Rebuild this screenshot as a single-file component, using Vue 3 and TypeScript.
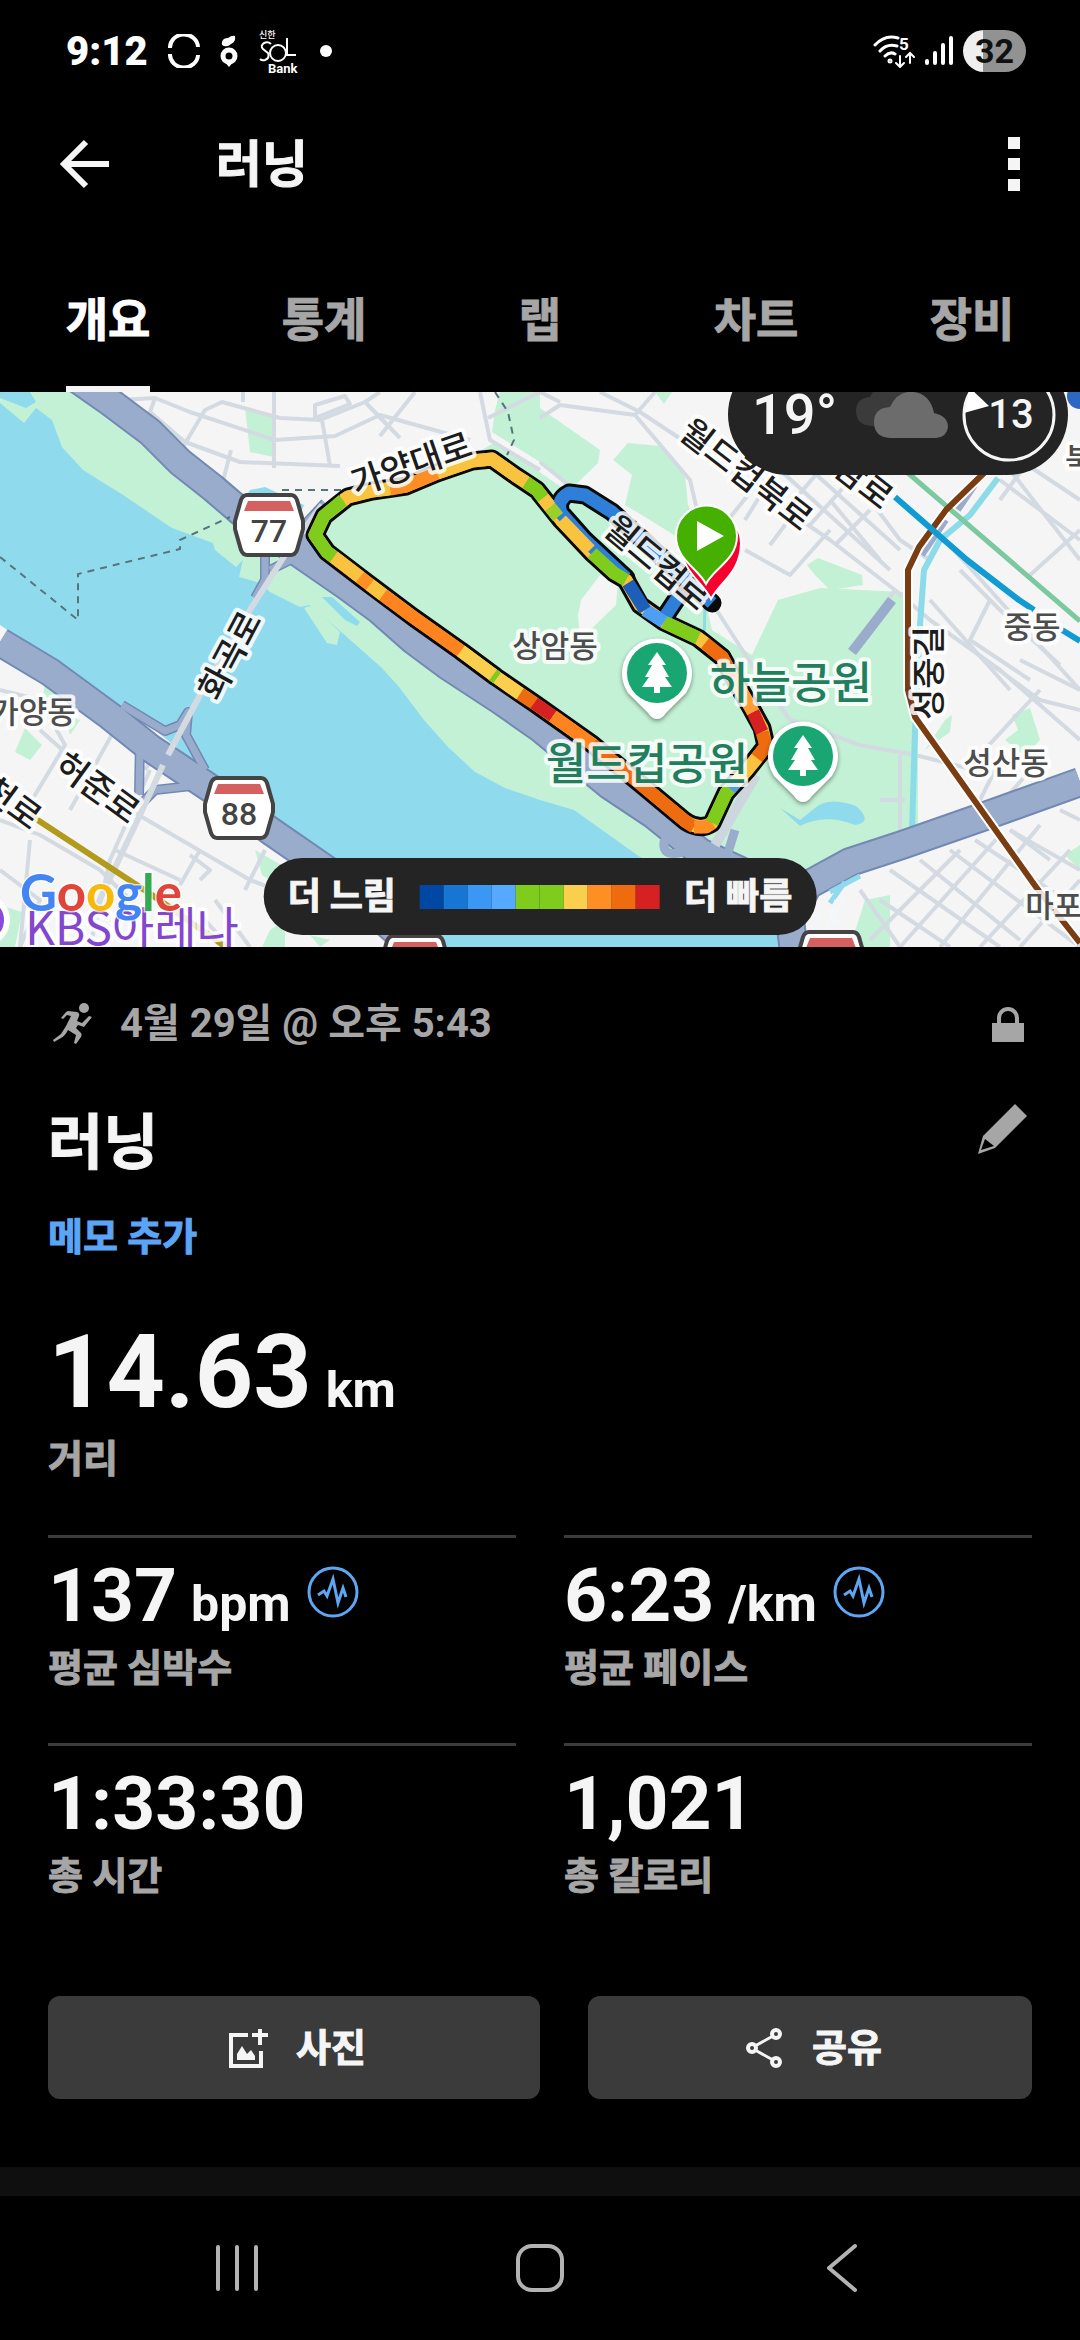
<script setup lang="ts">
import { ref } from 'vue'

interface Metric { value: string; unit?: string; label: string; insight?: boolean }
interface MapLabel { text: string; x: number; y: number; size: number; turn?: number; kind: 'road' | 'area' | 'park' | 'place' }
interface Segment { color: string; points: string }

const tabs = ['개요', '통계', '랩', '차트', '장비']
const active = ref('개요')

const metrics: Metric[] = [
  { value: '137', unit: 'bpm', label: '평균 심박수', insight: true },
  { value: '6:23', unit: '/km', label: '평균 페이스', insight: true },
  { value: '1:33:30', label: '총 시간' },
  { value: '1,021', label: '총 칼로리' },
]

const scale = ['#0048a3', '#1776d3', '#3b97f4', '#55a9ff', '#7fcc1d', '#7fcc1d', '#f9cf4d', '#ff8f24', '#ef6b10', '#d52121']

const loop = 'M492 459L472 461L437 473L406 486L372 491L348 497L324 516L315 535L327 552L365 581L413 617L461 651L496 677L534 703L592 744L643 786L685 821Q700 831 712 823L726 793L747 770L766 746L762 728L750 706L733 677L722 657L698 638L664 622L640 605L626 580L614 573L592 553L561 520L537 490L516 476Z'
const spur = 'M626 578L585 540L561 513Q556 500 569 493L585 495L612 512L712 603M664 618L680 594'

const segments: Segment[] = [
  { color: '#7fcc1d', points: '343,500 324,516 315,535 327,552 334,557' },
  { color: '#f9c23f', points: '334,557 360,577' },
  { color: '#ff8f24', points: '360,577 370,585' },
  { color: '#f9c23f', points: '370,585 383,595' },
  { color: '#ff8420', points: '383,595 413,617 461,651' },
  { color: '#f9cf4d', points: '461,651 496,677 520,694' },
  { color: '#7fcc1d', points: '493,675 497,678' },
  { color: '#ef6b10', points: '520,694 534,703' },
  { color: '#d52121', points: '534,703 553,716' },
  { color: '#ff8420', points: '553,716 592,744' },
  { color: '#ef6b10', points: '592,744 643,786 685,821 694,827' },
  { color: '#ff8f24', points: '694,827 706,827 712,823' },
  { color: '#7fcc1d', points: '712,823 726,793 730,789' },
  { color: '#4f9fe0', points: '730,789 736,782' },
  { color: '#f9c23f', points: '736,782 747,770 757,758' },
  { color: '#ef6b10', points: '757,758 766,746 762,732' },
  { color: '#d52121', points: '762,732 753,712' },
  { color: '#ff9c35', points: '753,712 733,677' },
  { color: '#ef6b10', points: '733,677 722,657 705,643' },
  { color: '#f9c23f', points: '705,643 698,638' },
  { color: '#7fcc1d', points: '698,638 664,622' },
  { color: '#4f9ef5', points: '664,622 645,610' },
  { color: '#1d5fb8', points: '645,610 628,583' },
  { color: '#7fcc1d', points: '626,580 614,573 592,553' },
  { color: '#f9c23f', points: '590,550 561,520' },
  { color: '#9bd02a', points: '558,517 550,507' },
  { color: '#f9c23f', points: '550,507 543,498' },
  { color: '#7fcc1d', points: '543,498 537,490 526,482' },
  { color: '#f9c23f', points: '526,482 516,476 492,459 472,461 437,473' },
  { color: '#ff8f24', points: '437,473 406,486 390,489' },
  { color: '#f9c23f', points: '390,489 372,491 348,497 343,500' },
]

const labels: MapLabel[] = [
  { text: '가양대로', x: 411, y: 463, size: 34, turn: -19, kind: 'road' },
  { text: '화곡로', x: 229, y: 655, size: 34, turn: -62, kind: 'road' },
  { text: '월드컵북로', x: 747, y: 474, size: 34, turn: 38, kind: 'road' },
  { text: '월드컵로', x: 658, y: 562, size: 34, turn: 40, kind: 'road' },
  { text: '상암로', x: 852, y: 472, size: 34, turn: 38, kind: 'road' },
  { text: '성중길', x: 928, y: 673, size: 34, turn: -90, kind: 'road' },
  { text: '허준로', x: 98, y: 787, size: 34, turn: 36, kind: 'road' },
  { text: '양천로', x: 0, y: 793, size: 34, turn: 36, kind: 'road' },
  { text: '상암동', x: 555, y: 646, size: 31, kind: 'area' },
  { text: '중동', x: 1032, y: 627, size: 31, kind: 'area' },
  { text: '북가좌동', x: 1122, y: 459, size: 31, kind: 'area' },
  { text: '성산동', x: 1006, y: 763, size: 31, kind: 'area' },
  { text: '마포구', x: 1068, y: 906, size: 31, kind: 'area' },
  { text: '가양동', x: 33, y: 712, size: 31, kind: 'area' },
  { text: '하늘공원', x: 791, y: 683, size: 44, kind: 'park' },
  { text: '월드컵공원', x: 647, y: 764, size: 44, kind: 'park' },
  { text: 'KBS아레나', x: 132, y: 928, size: 46, kind: 'place' },
]

const shields = [
  { x: 269, y: 525, no: '77' },
  { x: 239, y: 808, no: '88' },
  { x: 415, y: 966, no: '88' },
  { x: 831, y: 962, no: '77' },
]

const trees = [{ x: 657, y: 673 }, { x: 803, y: 756 }]

const highways = [
  'M70 374L110 402L150 432L180 462L213 488L248 518L303 556L345 585L379 610L413 640L448 666L500 700L540 728L609 785L654 815L700 852L760 880L800 900',
  'M0 642L50 672L110 716L150 748L213 790L272 832L330 872L400 935L420 960',
  'M795 960L790 920L808 885L850 862L902 845L988 815L1080 782',
]

const streets = [
  'M120 400L155 398L150 412L185 442L240 462L340 466', 'M155 398L190 412L275 440L335 436L380 415L470 440',
  'M180 452L205 410L222 402L280 418L320 420L365 402L380 392', 'M243 392V402M274 392V468', 'M231 450L222 485',
  'M365 402L400 438M380 436L415 392', 'M322 420L330 466', 'M315 405L345 396L350 404L315 418Z', 'M480 392L490 440L540 470',
  'M488 418L540 392', 'M540 418L560 405L635 415L690 480L697 510', 'M600 392L640 412L720 465L830 540L895 590',
  'M635 415L655 392', 'M895 590L930 620L1000 670L1080 740', 'M895 590L860 640', 'M745 550L790 575L830 530',
  'M720 530L760 480L790 490', 'M712 603L752 665L790 720', 'M790 720L860 745L915 755L975 770', 'M540 392L560 402M540 462L575 490',
  'M770 480L745 520M800 505L770 545M830 500L880 560', 'M840 480L870 500L900 540L930 560', 'M780 470L890 570M800 460L900 550M820 470L790 505M850 480L810 525M870 510L835 545',
  'M945 540L1080 690', 'M960 570L1000 610L1060 665', 'M990 600L970 640L1030 680', 'M930 600L1010 690', 'M1080 530L1030 575M1000 480L1080 540M1010 470L1080 560M1020 460L1080 500M1040 445L1000 500',
  'M985 660L1040 700L1080 710M1040 690L975 760M1020 660L1080 690', 'M900 755V838M880 800H905', 'M995 770L975 810M1030 770L1000 805',
  'M0 690L40 700L65 745L20 820M40 730L130 810L250 880L330 910', 'M150 770L110 860L90 947M145 770L160 745', 'M0 820L40 835L100 870M30 840L20 947M70 810L120 720',
  'M115 850L180 880M200 850L180 885M190 855L210 870L200 880M265 850L245 890M100 870L130 900', 'M0 870L40 900L20 947', 'M215 900L250 947M200 915L230 947',
  'M890 870L1000 947M880 900L950 947M920 860L1020 940M950 850L1080 947M975 840L1080 910M1010 830L1080 870M860 890L900 947',
  'M870 940L960 850M900 947L1000 835M940 947L1040 825M980 947L1070 850M1020 947L1080 880M1050 860L1010 830M1060 810L1080 820',
]
</script>

<template>
  <main class="screen">
    <header class="status">
      <div class="status-side">
        <span class="clock">9:12</span>
        <svg width="32" height="34" viewBox="0 0 32 34" fill="none" stroke="#fff" stroke-width="4"><path d="M2 14A14 13 0 0 1 30 13M2 20A14 13 0 0 0 30 21" /></svg>
        <svg width="18" height="32" viewBox="0 0 18 32" fill="#fff"><circle cx="9" cy="21" r="6" fill="none" stroke="#fff" stroke-width="5" /><path d="M4 26L9 32L14 26ZM2 7Q3 3 8 3Q12 0 15 1Q16 7 11 9Q8 12 4 11Q1 10 2 7Z" /></svg>
        <svg width="42" height="48" viewBox="0 0 42 48" fill="#fff">
          <text x="1" y="11" font-size="9" font-weight="500">신한</text>
          <path d="M13 17Q10 14 6 16Q2 19 5 22L10 26Q12 31 7 33Q4 34 2 32M29 11V28H38" fill="none" stroke="#fff" stroke-width="2" />
          <circle cx="20" cy="26" r="8" fill="none" stroke="#fff" stroke-width="2" />
          <text x="10" y="46" font-size="13" font-weight="700">Bank</text>
        </svg>
        <i class="dot" />
      </div>
      <div class="status-side right">
        <svg width="42" height="34" viewBox="0 0 42 34" fill="none" stroke="#fff" stroke-width="3" stroke-linecap="round">
          <path d="M2 11Q12 0 25 4M7 17Q14 9 24 12M12 22Q17 17 22 20" /><circle cx="17" cy="27" r="1" /><path d="M27 22V32M23 29L27 33L31 29M37 29V20M33 23L37 19L41 23" stroke-width="2" />
          <text x="26" y="16" font-size="17" font-weight="700" fill="#fff" stroke="none">5</text>
        </svg>
        <svg width="28" height="30" viewBox="0 0 28 30" stroke="#fff" stroke-width="4" stroke-linecap="round"><path d="M2 25V27M10 17V27M18 9V27M26 2V27" /></svg>
        <span class="battery">32</span>
      </div>
    </header>

    <div class="appbar">
      <button class="plain" aria-label="뒤로">
        <svg width="50" height="50" viewBox="0 0 50 50" fill="none" stroke="#f5f5f5" stroke-width="6"><path d="M49 25H5M26 3L4 25L26 47" /></svg>
      </button>
      <h1>러닝</h1>
      <button class="plain more" aria-label="더보기"><i /><i /><i /></button>
    </div>

    <nav class="tabs">
      <button v-for="t in tabs" :key="t" :class="{ on: t === active }" @click="active = t"><span>{{ t }}</span></button>
    </nav>

    <section class="map">
      <svg class="canvas" viewBox="0 392 1080 555" role="img" aria-label="지도">
        <rect y="392" width="1080" height="555" fill="#f5f5f5" />
        <g fill="#c3f1d5">
          <path d="M0 392H75L180 465L240 520L300 560L440 668L600 785L700 855L800 880L780 947H560L0 600Z" />
          <path d="M245 408L274 417V457L250 452ZM500 392L540 392V462L492 432L495 410Z" />
          <path d="M540 408L600 450L598 463L570 490L540 462ZM655 392H672L664 404Z" />
          <path d="M613 460L628 443L660 446L685 475L688 505L700 530L690 545L650 520L625 505L632 475Z" />
          <path d="M324 518L350 499L440 476L495 442L560 486L620 510L705 600L712 630L752 655L778 600L820 588L903 592L918 735L918 833L850 858L800 890L690 845L640 800L534 720L413 632L327 565Z" />
          <path d="M807 565L818 558L862 575L863 585L830 590L815 575ZM945 720L952 715L950 732L925 750ZM1012 715L1030 708L1040 740L1025 756L1005 740L1018 730ZM1080 845L1065 855L1080 870ZM865 900L890 895V947H850Z" />
          <path d="M25 728L42 745L30 760L15 752ZM45 685L60 695L55 710L42 700ZM65 715L80 720L70 735ZM255 850L290 870L285 890L262 875ZM0 905L22 912L15 947H0ZM270 930L285 920V947H262ZM310 935L330 940L320 947Z" />
        </g>
        <path d="M581 600L600 575L618 583L616 605L580 640L578 615Z" fill="#f5f5f5" />
        <g fill="#90daee">
          <path d="M0 403L24 423L36 408L52 420L62 447L83 470L120 493L172 528L213 543L215 550L236 567L243 560L239 577L260 583L270 592L300 607L310 605L339 630L382 668L399 687L424 720L448 747L475 772L505 788L540 800L574 810L640 857L700 885L780 905V947H425L370 890L317 858L213 777L155 730L110 700L60 665L0 625Z" />
          <path d="M0 392H30L36 402L26 408L0 398ZM250 490L265 487L304 505L300 515L240 505ZM322 597L332 597L360 622L357 626L345 620Z" />
          <path d="M780 808L800 820L815 808Q828 796 856 806Q874 822 855 825Q825 813 800 826Z" />
        </g>
        <path d="M304 608L312 605L340 632L337 645L327 643Z" fill="#c3f1d5" />
        <g fill="none" stroke="#d4dae2" stroke-width="4" stroke-linejoin="round"><path v-for="(s, i) in streets" :key="i" :d="s" /></g>
        <g fill="none" stroke="#8bdbe8" stroke-width="6"><path d="M998 478L970 515L940 540L924 570L920 625L915 730L912 832" /><path d="M705 606L704 640" stroke-width="3" /></g>
        <path d="M892 600L852 652" fill="none" stroke="#9aaccb" stroke-width="10" />
        <path d="M946 520L922 555M975 485L958 510" fill="none" stroke="#9aaccb" stroke-width="6" />
        <g fill="none" stroke="#7189b3" stroke-linejoin="round">
          <path v-for="(h, i) in highways" :key="'e' + i" :d="h" stroke-width="30" />
          <path d="M325 503L295 535M265 550V580L255 598M270 570L300 555M122 705L165 731L180 725L188 712L186 735L205 770M140 740L139 795M140 805L155 790L200 785" stroke-width="10" />
        </g>
        <g fill="none" stroke="#9aaccb" stroke-linejoin="round">
          <path v-for="(h, i) in highways" :key="'f' + i" :d="h" stroke-width="26" />
          <path d="M325 503L295 535M265 550V580L255 598M270 570L300 555M122 705L165 731L180 725L188 712L186 735L205 770M140 740L139 795M140 805L155 790L200 785" stroke-width="7" />
          <path d="M690 850Q662 860 664 842Q672 830 690 848M735 830L725 862" stroke-width="9" />
        </g>
        <path d="M300 528L315 548L345 572L330 578L296 556Z" fill="#9aaccb" />
        <path d="M860 876L830 892M845 882L830 903" fill="none" stroke="#90daee" stroke-width="5" />
        <g fill="none" stroke="#d4dae2" stroke-width="6"><path d="M322 505L285 555L250 610L200 695L168 755M163 765L140 815L95 910" /><path d="M756 775L715 845" stroke="#cdd5df" stroke-width="10" /></g>
        <path d="M825 935L836 900M842 925L832 920L845 895M813 905L818 922" fill="none" stroke="#f3f6fa" stroke-width="3" />
        <g fill="none" stroke="#55747c" stroke-width="2" stroke-dasharray="7 6"><path d="M0 557L78 620V574L180 549V540L230 517M282 490H345M495 392L508 412L514 440L507 455" /></g>
        <g fill="none" stroke-linejoin="round">
          <path d="M984 473L946 510L919 547L908 570V690L915 717L967 790L1036 887L1080 943" stroke="#fff" stroke-width="10" />
          <path d="M908 473L1080 621" stroke="#7cc8a0" stroke-width="5" />
          <path d="M984 473L946 510L919 547L908 570V690L915 717L967 790L1036 887L1080 943" stroke="#7a3d12" stroke-width="6" />
          <path d="M895 497L967 560L1019 600L1034 610M1062 630L1080 641" stroke="#109bd2" stroke-width="6" />
          <path d="M30 815L155 897L230 950" stroke="#b19a1c" stroke-width="6" />
        </g>
        <circle cx="1080" cy="396" r="13" fill="#2d67c4" />

        <g fill="none" stroke="#0a0a0a" stroke-width="19" stroke-linejoin="round" stroke-linecap="round"><path :d="loop" /><path :d="spur" /></g>
        <g fill="none" stroke-width="13" stroke-linejoin="round">
          <path :d="loop" stroke="#f9c23f" />
          <path :d="spur" stroke="#2f7fd8" />
          <polyline v-for="(s, i) in segments" :key="'s' + i" :points="s.points" :stroke="s.color" />
        </g>

        <g v-for="(s, i) in shields" :key="'h' + i" :transform="`translate(${s.x} ${s.y})`">
          <path d="M-22 -30H22Q26 -30 28 -25L34 -4V4L28 25Q26 30 22 30H-22Q-26 30 -28 25L-34 4V-4L-28 -25Q-26 -30 -22 -30Z" fill="#fff" stroke="#444" stroke-width="4" />
          <path d="M-21 -24H21L25 -14H-25Z" fill="#d56060" />
          <text class="shield" y="17">{{ s.no }}</text>
        </g>

        <g v-for="(l, i) in labels" :key="'l' + i" :transform="`translate(${l.x} ${l.y}) rotate(${l.turn ?? 0})`">
          <text :class="['lbl', l.kind]" :font-size="l.size" :y="Math.round(l.size * 0.37)">{{ l.text }}</text>
        </g>

        <g v-for="(t, i) in trees" :key="'t' + i" :transform="`translate(${t.x} ${t.y})`">
          <path class="pin" d="M0 46Q-5 46 -9 40L-29 20A35 35 0 1 1 29 20L9 40Q5 46 0 46Z" />
          <circle r="30" fill="#1aa673" />
          <path d="M0 -21L9 -8H5L12 4H8L15 14H3V20H-3V14H-15L-8 4H-12L-5 -8H-9Z" fill="#fff" />
        </g>
        <circle cx="-17" cy="920" r="24" fill="#8a4bdc" stroke="#fff" stroke-width="6" />

        <path d="M711 599C703 582 681 572 681 543A30 30 0 0 1 741 543C741 572 720 582 711 599Z" fill="#f5002f" stroke="#fff" stroke-width="2" />
        <path d="M706 584C698 568 676 560 676 536A30 30 0 0 1 737 536C737 560 714 568 706 584Z" fill="#45b000" stroke="#fff" stroke-width="2" />
        <path d="M697 521L724 536L697 551Z" fill="#fff" />
        <text class="google" x="20" y="911"><tspan fill="#4285f4">G</tspan><tspan fill="#e0443a">o</tspan><tspan fill="#f6b90c">o</tspan><tspan fill="#4285f4">g</tspan><tspan fill="#34a853">l</tspan><tspan fill="#e0443a">e</tspan></text>
      </svg>

      <div class="weather">
        <span class="temp">19°</span>
        <svg width="94" height="50" viewBox="0 0 94 50"><path d="M16 36Q0 35 0 21Q0 8 14 7Q20 -6 34 -6Q50 -6 54 8V36Z" fill="#3b3b3b" /><path d="M34 48Q18 47 18 32Q18 18 34 17Q42 0 58 2Q74 4 78 23Q92 26 92 37Q91 47 80 48Z" fill="#6c6c6c" /></svg>
        <div class="wind">
          <svg width="94" height="94" viewBox="0 0 94 94"><circle cx="47" cy="47" r="45" fill="none" stroke="#f5f5f5" stroke-width="3" /><path d="M8 20L2 45L27 38Z" fill="#fff" /></svg>
          <span>13</span>
        </div>
      </div>

      <div class="legend">
        <span>더 느림</span>
        <div class="bar"><i v-for="(c, i) in scale" :key="i" :style="{ background: c }" /></div>
        <span>더 빠름</span>
      </div>
    </section>

    <section class="details">
      <div class="row date">
        <svg width="40" height="42" viewBox="0 0 40 42" fill="#a6a6a6"><circle cx="31" cy="5" r="5" /><path d="M15 8L24 9Q27 10 26 13L24 18L29 20L36 13L39 14L31 24L25 22L23 25L28 30Q29 32 28 34L23 41L21 40L23 32L15 27Q12 33 8 35L1 39L0 37L8 31L13 23L18 13L14 12L10 16L8 15L13 9Z" /></svg>
        <p>4월 29일 @ 오후 5:43</p>
        <svg width="32" height="36" viewBox="0 0 32 36"><path d="M0 17H32V36H0Z" fill="#a6a6a6" /><path d="M7 18V12A9 9 0 0 1 25 12V18" fill="none" stroke="#a6a6a6" stroke-width="4" /></svg>
      </div>
      <div class="row title">
        <h2>러닝</h2>
        <button class="plain" aria-label="편집">
          <svg width="52" height="52" viewBox="0 0 52 52"><path d="M38 1L50 13L18 45L1 51L6 33Z" fill="#a6a6a6" /><path d="M8 36L17 43L4 47Z" fill="#000" /></svg>
        </button>
      </div>
      <a class="memo" href="#">메모 추가</a>

      <div class="distance">
        <p class="value big">14.63<small>km</small></p>
        <p class="label">거리</p>
      </div>

      <div class="grid">
        <div v-for="m in metrics" :key="m.label" class="cell">
          <p class="value">{{ m.value }}<small v-if="m.unit">{{ m.unit }}</small>
            <svg v-if="m.insight" width="52" height="52" viewBox="0 0 52 52" fill="none" stroke="#5ea6f2" stroke-width="3"><circle cx="26" cy="26" r="24" /><path d="M11 29L17 25L20 30L26 13L31 37L36 22L39 31" /></svg>
          </p>
          <p class="label">{{ m.label }}</p>
        </div>
      </div>

      <div class="actions">
        <button class="photo">
          <svg width="44" height="44" viewBox="0 0 44 44"><path d="M22 9H5V40H35V25" fill="none" stroke="#f5f5f5" stroke-width="4" /><path d="M34 3V19M26 9H42" stroke="#f5f5f5" stroke-width="4" /><path d="M11 34V28L16 20L21 28L25 24L29 30V34Z" fill="#f5f5f5" /></svg>
          사진
        </button>
        <button class="share">
          <svg width="44" height="44" viewBox="0 0 44 44" fill="none" stroke="#f5f5f5" stroke-width="4"><circle cx="34" cy="8" r="4" /><circle cx="10" cy="22" r="4" /><circle cx="34" cy="36" r="4" /><path d="M13 20L31 10M13 24L31 34" stroke-width="3" /></svg>
          공유
        </button>
      </div>
    </section>

    <div class="strip" />

    <footer class="sysnav">
      <button class="plain" aria-label="최근 앱"><svg width="50" height="50" viewBox="0 0 50 50" stroke="#b3b3b3" stroke-width="4" stroke-linecap="round"><path d="M5 4V46M24 4V46M43 4V46" /></svg></button>
      <button class="plain" aria-label="홈"><svg width="50" height="50" viewBox="0 0 50 50" fill="none" stroke="#b3b3b3" stroke-width="4"><rect x="3" y="3" width="44" height="44" rx="14" /></svg></button>
      <button class="plain" aria-label="이전"><svg width="50" height="50" viewBox="0 0 50 50" fill="none" stroke="#b3b3b3" stroke-width="4" stroke-linecap="round" stroke-linejoin="round"><path d="M38 3L12 25L38 47" /></svg></button>
    </footer>
  </main>
</template>

<style>
body { margin: 0; background: #000; }
</style>

<style scoped>
.screen { min-height: 100vh; display: flex; flex-direction: column; background: #000; color: #f5f5f5; font-family: Roboto, 'Noto Sans CJK KR', sans-serif; }
p, h1, h2 { margin: 0; }
svg { display: block; flex: none; }
button { font: inherit; color: inherit; border: 0; padding: 0; cursor: pointer; }
.plain { background: none; display: flex; align-items: center; justify-content: center; }
h1, h2, .tabs, .legend, .memo, .label, .actions { -webkit-text-stroke: 1px currentColor; }

.status { height: 102px; padding: 0 54px 0 66px; display: flex; justify-content: space-between; align-items: center; }
.status-side { display: flex; align-items: center; gap: 20px; color: #fff; }
.status-side.right { gap: 10px; }
.clock { font-size: 40px; font-weight: 900; }
.dot { width: 12px; height: 12px; border-radius: 50%; background: #fff; }
.battery { width: 63px; height: 42px; border-radius: 21px; background: linear-gradient(90deg, #efefef 20px, #929292 20px); color: #111; font-size: 34px; font-weight: 700; line-height: 42px; text-align: center; }

.appbar { height: 124px; padding: 0 60px; display: flex; align-items: center; }
.appbar h1 { flex: 1; margin-left: 106px; padding-top: 2px; font-size: 50px; font-weight: 700; line-height: 64px; }
.more { flex-direction: column; gap: 9px; }
.more i { width: 12px; height: 12px; background: #f5f5f5; }

.tabs { margin-top: 24px; display: grid; grid-template-columns: repeat(5, 1fr); }
.tabs button { background: none; color: #a6a6a6; font-size: 46px; font-weight: 700; line-height: 132px; display: flex; justify-content: center; }
.tabs span { padding-top: 4px; border-bottom: 6px solid transparent; }
.tabs .on { color: #fff; }
.tabs .on span { border-color: #f5f5f5; }

.map { position: relative; overflow: hidden; }
.canvas { width: 100%; height: auto; }
.lbl { text-anchor: middle; paint-order: stroke; stroke: #fff; stroke-width: 8px; stroke-linejoin: round; stroke-opacity: 0.85; font-weight: 500; font-family: 'Noto Sans CJK KR', sans-serif; }
.road { fill: #1c1c1c; }
.area { fill: #4d4d4d; }
.park { fill: #217f5d; }
.place { fill: #8347cf; font-weight: 400; }
.shield { text-anchor: middle; font-size: 32px; font-weight: 500; fill: #444; }
.google { font-family: Lato, sans-serif; font-size: 51px; font-weight: 700; paint-order: stroke; stroke: #fff; stroke-width: 3px; stroke-opacity: 0.7; }
.pin { fill: #fff; filter: drop-shadow(0 2px 2px rgba(0, 0, 0, 0.4)); }

.weather { position: absolute; right: 12px; top: -38px; height: 121px; box-sizing: border-box; padding: 0 12px 0 24px; display: flex; align-items: center; gap: 12px; border-radius: 61px; background: #242424; }
.temp { font-size: 56px; font-weight: 500; width: 92px; }
.wind { position: relative; }
.wind span { position: absolute; inset: 0; padding-left: 4px; line-height: 94px; text-align: center; font-size: 40px; font-weight: 500; }
.legend { position: absolute; left: 50%; bottom: 12px; transform: translateX(-50%); height: 77px; padding: 0 24px; display: flex; align-items: center; gap: 24px; border-radius: 39px; background: #242424; font-size: 36px; font-weight: 700; line-height: 48px; white-space: nowrap; }
.bar { display: flex; }
.bar i { width: 24px; height: 24px; }

.details { padding: 41px 48px 68px; }
.row { display: flex; align-items: center; }
.date { height: 72px; padding: 0 8px 0 5px; color: #a6a6a6; font-size: 40px; font-weight: 700; line-height: 56px; }
.date p { flex: 1; margin-left: 27px; }
.title { height: 84px; margin-top: 42px; justify-content: space-between; }
.title h2 { font-size: 60px; font-weight: 700; line-height: 84px; }
.title .plain { margin: 0 3px 30px 0; }
.memo { display: block; width: max-content; margin-top: 23px; color: #5aa5f6; font-size: 38px; font-weight: 700; line-height: 56px; text-decoration: none; }
.distance { margin: 48px 0; }
.value { display: flex; align-items: baseline; font-size: 75px; font-weight: 700; line-height: 90px; white-space: nowrap; }
.value small { margin-left: 14px; font-size: 50px; line-height: 50px; }
.value svg { align-self: flex-start; margin: 16px 0 0 16px; }
.big { font-size: 102px; line-height: 118px; }
.label { color: #a6a6a6; font-size: 38px; font-weight: 700; line-height: 56px; }
.grid { display: grid; grid-template-columns: 1fr 1fr; column-gap: 48px; }
.cell { border-top: 3px solid #3c3c3c; padding: 12px 0 47px; }
.actions { display: flex; gap: 48px; margin-top: 45px; }
.actions button { height: 103px; padding-left: 4px; border-radius: 12px; background: #3b3b3b; font-size: 38px; font-weight: 700; line-height: 56px; display: flex; align-items: center; justify-content: center; gap: 26px; }
.photo { flex: 492; }
.share { flex: 444; }

.strip { height: 29px; background: #0f0f0f; }
.sysnav { height: 144px; padding: 0 87px; display: grid; grid-template-columns: repeat(3, 1fr); }
</style>
